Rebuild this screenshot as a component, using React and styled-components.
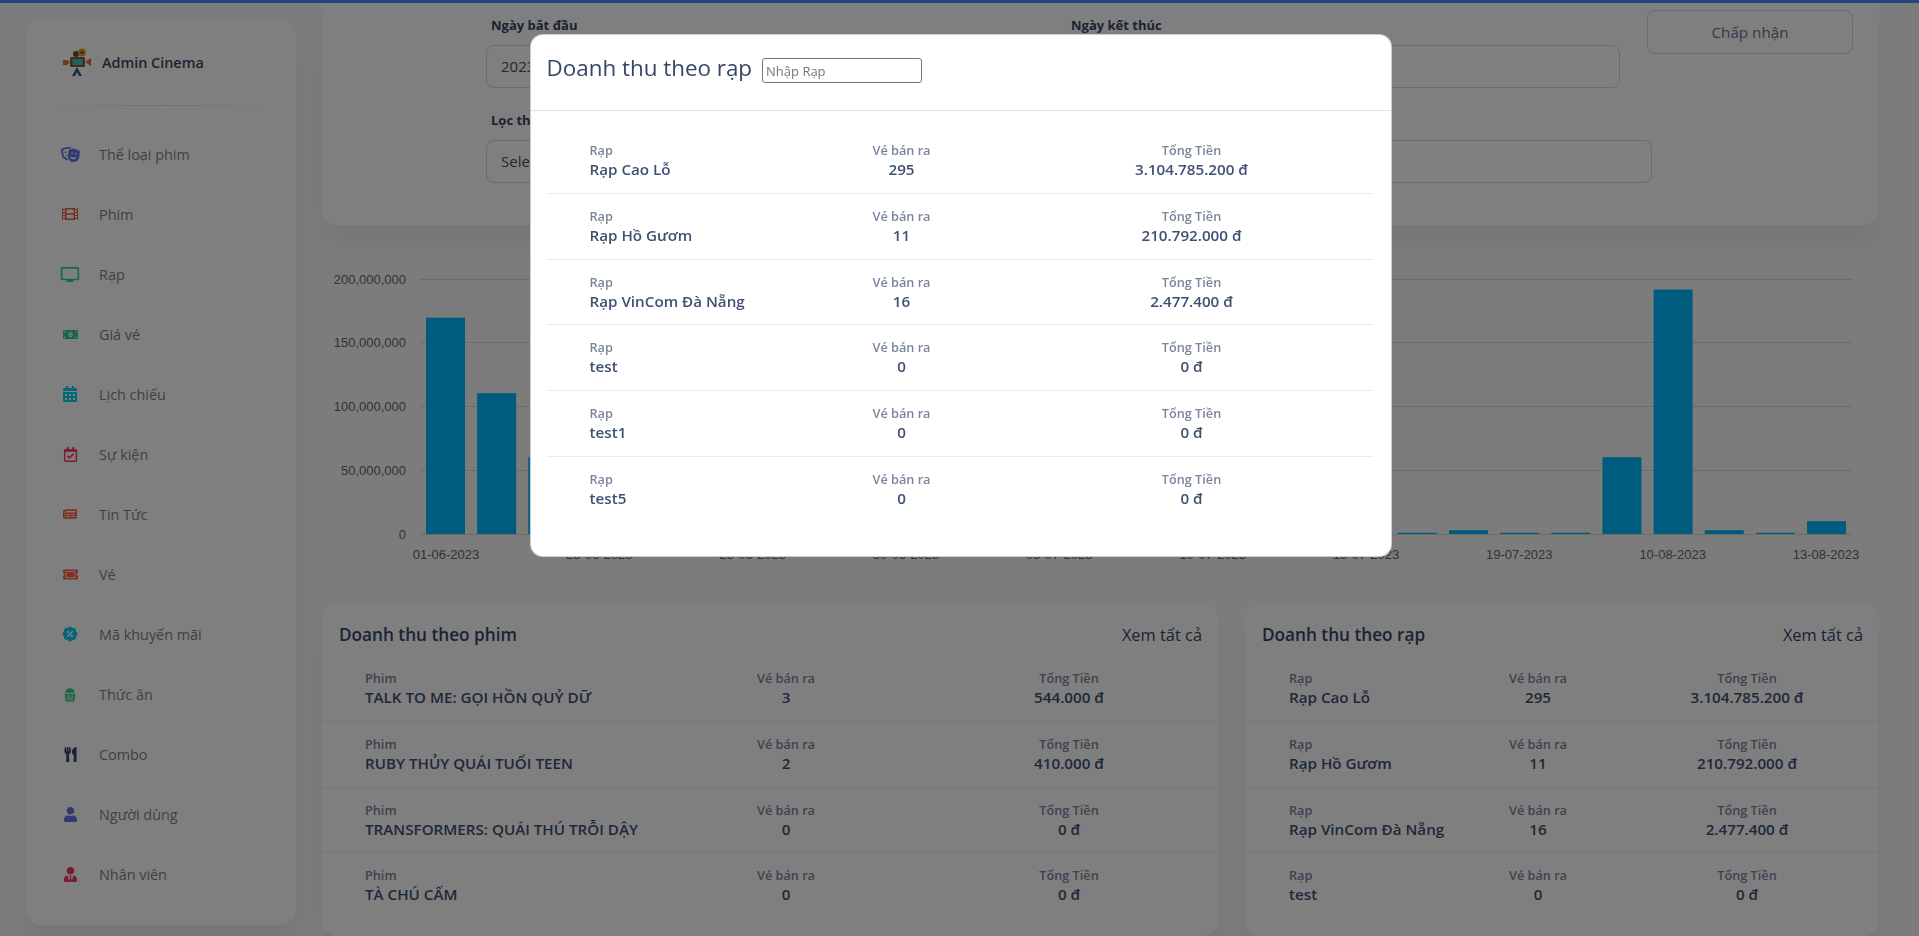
import styled, {createGlobalStyle} from "styled-components";
import {
  FaTheaterMasks, FaFilm, FaMoneyBillAlt, FaCalendarAlt, FaRegCalendarCheck, FaNewspaper,
  FaTicketAlt, FaUtensils, FaUser, FaUserTie
} from "react-icons/fa";
import {MdOutlineTv} from "react-icons/md";
import {TbRosetteDiscountFilled} from "react-icons/tb";

const GlobalStyle = createGlobalStyle`
  html, body {
    margin: 0;
    height: 936px;
    overflow: hidden;
    background: #f8f9fa;
    font-family: "Open Sans", "Noto Sans", sans-serif;
  }
  * { box-sizing: border-box; }
`;

const TopBar = styled.div`
  height: 3px;
  background: #3a8ffe;
`;

const Page = styled.div`
  display: flex;
  height: 933px;
`;

const Sidebar = styled.aside`
  width: 270px;
  height: 905px;
  margin: 17px 0 0 26px;
  padding-top: 28px;
  background: #fff;
  border-radius: 16px;
  box-shadow: 0 20px 27px rgba(0, 0, 0, .05);
  flex-shrink: 0;
`;

const Brand = styled.div`
  display: flex;
  align-items: center;
  gap: 10px;
  height: 28px;
  padding-left: 36px;
  font-size: 14.4px;
  font-weight: 600;
  color: #344767;
`;

const SideDivider = styled.div`
  height: 1px;
  margin: 29px 20px 18px;
  background: linear-gradient(90deg, transparent, rgba(0, 0, 0, .12), transparent);
`;

const Nav = styled.nav`
  display: flex;
  flex-direction: column;
`;

const NavItem = styled.a`
  display: flex;
  align-items: center;
  height: 60px;
  padding-left: 34px;
  font-size: 14.4px;
  color: #7f8188;
`;

const NavIcon = styled.span`
  display: flex;
  justify-content: center;
  width: 20px;
  margin-right: 19px;
  font-size: ${p => p.$size}px;
  color: ${p => p.$color};
`;

const Main = styled.main`
  flex: 1;
  min-width: 0;
  margin: 0 40px 0 26px;
  display: flex;
  flex-direction: column;
`;

const FilterCard = styled.section`
  height: 222px;
  padding: 7px 26px 0 164px;
  background: #fff;
  border-radius: 0 0 16px 16px;
  box-shadow: 0 20px 27px rgba(0, 0, 0, .05);
`;

const FilterRow = styled.div`
  display: flex;
  margin-bottom: 23px;
`;

const Field = styled.div`
  width: ${p => p.$width}px;
  margin-right: ${p => p.$gap || 0}px;
  padding-top: ${p => p.$top || 0}px;
`;

const FieldLabel = styled.label`
  display: block;
  height: 19px;
  margin: 0 0 10px 5px;
  font-size: 13px;
  line-height: 19px;
  font-weight: 700;
  color: #344767;
`;

const FieldBox = styled.div`
  height: 43px;
  padding: 0 14px;
  border: 1px solid #d2d6da;
  border-radius: 8px;
  background: #fff;
  font-size: 15px;
  line-height: 41px;
  color: #495057;
`;

const AcceptButton = styled.button`
  width: 206px;
  height: 44px;
  border: 1px solid #d2d6da;
  border-radius: 8px;
  background: #fff;
  font-family: inherit;
  font-size: 15.2px;
  color: #67748e;
`;

const ChartArea = styled.div`
  height: 378px;
`;

const ChartSvg = styled.svg`
  display: block;
  font-family: "Liberation Sans", Arial, sans-serif;
  font-size: 13px;
  fill: #666;
`;

const Cards = styled.div`
  display: flex;
  gap: 27px;
`;

const Card = styled.section`
  width: ${p => p.$width}px;
  height: 333px;
  background: #fff;
  border-radius: 16px;
  box-shadow: 0 20px 27px rgba(0, 0, 0, .05);
`;

const CardHead = styled.div`
  display: flex;
  justify-content: space-between;
  align-items: center;
  height: 53px;
  padding: 9px 16px 0 17px;
`;

const CardTitle = styled.h6`
  margin: 0;
  font-size: 17.2px;
  font-weight: 600;
  color: #344767;
`;

const SeeAll = styled.a`
  font-size: 16.4px;
  color: #344767;
`;

const Row = styled.div`
  display: grid;
  grid-template-columns: ${p => p.$columns};
  height: 65.8px;
  padding-top: 13px;
  border-bottom: 1px solid ${p => (p.$last ? "transparent" : "#e9ecef")};
`;

const Cell = styled.div`
  text-align: ${p => (p.$center ? "center" : "left")};
  padding-left: ${p => p.$pad || 0}px;
  white-space: nowrap;
`;

const CellLabel = styled.div`
  font-size: 12.7px;
  line-height: 18px;
  font-weight: 600;
  color: #7a859c;
`;

const CellValue = styled.div`
  font-size: 15.2px;
  line-height: 20px;
  font-weight: 600;
  color: #3f5173;
`;

const Overlay = styled.div`
  position: fixed;
  inset: 0;
  display: flex;
  justify-content: center;
  align-items: flex-start;
  padding: 34px 0 0 2px;
  background: rgba(0, 0, 0, .5);
`;

const Modal = styled.div`
  width: 862px;
  height: 523px;
  background: #fff;
  border: 1px solid rgba(0, 0, 0, .2);
  border-radius: 13px;
`;

const ModalHead = styled.div`
  display: flex;
  align-items: flex-start;
  gap: 10px;
  height: 76px;
  padding: 18px 16px 0;
  border-bottom: 1px solid #dee2e6;
`;

const ModalTitle = styled.h5`
  margin: 0;
  font-size: 22.4px;
  line-height: 30px;
  font-weight: 500;
  color: #344767;
`;

const SearchInput = styled.input`
  width: 160px;
  height: 25px;
  margin-top: 5px;
  padding: 1px 3px;
  border: 1px solid #767676;
  border-radius: 3px;
  font-family: inherit;
  font-size: 13px;
  &::placeholder { color: #757575; }
`;

const ModalBody = styled.div`
  padding: 17px 18px 0 16px;
`;

const menu = [
  ["Thể loại phim", <FaTheaterMasks/>, "#5e72e4", 19],
  ["Phim", <FaFilm/>, "#ea5b3e", 16],
  ["Rạp", <MdOutlineTv/>, "#2dce89", 23],
  ["Giá vé", <FaMoneyBillAlt/>, "#2dce89", 15],
  ["Lịch chiếu", <FaCalendarAlt/>, "#11cdef", 16],
  ["Sự kiện", <FaRegCalendarCheck/>, "#f5365c", 15],
  ["Tin Tức", <FaNewspaper/>, "#fb6340", 14],
  ["Vé", <FaTicketAlt/>, "#fb6340", 15],
  ["Mã khuyến mãi", <TbRosetteDiscountFilled/>, "#11cdef", 18],
  ["Thức ăn", <PopcornIcon/>, "#2dce89", 15],
  ["Combo", <FaUtensils/>, "#344767", 15],
  ["Người dùng", <FaUser/>, "#5e72e4", 15],
  ["Nhân viên", <FaUserTie/>, "#f5365c", 15],
];

const films = [
  ["TALK TO ME: GỌI HỒN QUỶ DỮ", "3", "544.000 đ"],
  ["RUBY THỦY QUÁI TUỔI TEEN", "2", "410.000 đ"],
  ["TRANSFORMERS: QUÁI THÚ TRỖI DẬY", "0", "0 đ"],
  ["TÀ CHÚ CẤM", "0", "0 đ"],
];

const cinemas = [
  ["Rạp Cao Lỗ", "295", "3.104.785.200 đ"],
  ["Rạp Hồ Gươm", "11", "210.792.000 đ"],
  ["Rạp VinCom Đà Nẵng", "16", "2.477.400 đ"],
  ["test", "0", "0 đ"],
  ["test1", "0", "0 đ"],
  ["test5", "0", "0 đ"],
];

const bars = [169, 110, 60, 4, 2, 1, 3, 2, 1, 4, 2, 1, 1, 2, 3, 1, 2, 1, 1, 1, 3, 1, 1, 60, 191, 3, 1, 10];
const dateLabels = [
  "01-06-2023", "23-06-2023", "28-06-2023", "30-06-2023", "05-07-2023",
  "10-07-2023", "15-07-2023", "19-07-2023", "10-08-2023", "13-08-2023"
];

function PopcornIcon() {
  return (
    <svg width="14" height="15" viewBox="0 0 18 18" fill="currentColor" preserveAspectRatio="none">
      <path d="M3 7a6 5.500 0 0 1 12 0z"/>
      <path d="M2 8h14l-1.600 9.500H3.600zM5.500 10l.6 6h1.200l-.5-6zM8.400 10v6h1.200v-6zM11.300 10l-.5 6h1.200l.6-6z" fillRule="evenodd"/>
    </svg>
  );
}

function CinemaLogo() {
  return (
    <svg width="30" height="30" viewBox="0 0 30 30">
      <circle cx="14" cy="7" r="3" fill="#6b4a1f"/>
      <circle cx="20" cy="5.500" r="4" fill="#d8a21f"/>
      <circle cx="20" cy="5.500" r="1.600" fill="#6b4a1f"/>
      <rect x="8" y="10" width="15" height="10" rx="1.500" fill="#8a5a2b"/>
      <rect x="10.500" y="12" width="10" height="6" fill="#3fc4c4"/>
      <path d="M23 15l6-4v8zM8 15l-3-2H1v5h4z" fill="#d07a3a"/>
      <path d="M15 20l-5 9h3l2-4 2 4h3z" fill="#2d5a88"/>
    </svg>
  );
}

function RevenueChart() {
  const yTicks = [[279, "200,000,000"], [342, "150,000,000"], [406, "100,000,000"], [470, "50,000,000"], [534, "0"]];
  return (
    <ChartSvg width="1557" height="378" viewBox="322 225 1557 378">
      {yTicks.map(([y, label]) => (
        <g key={label}>
          <line x1="420" x2="1852" y1={y + .5} y2={y + .5} stroke="#d9d9d9"/>
          <text x="406" y={y + 5} textAnchor="end">{label}</text>
        </g>
      ))}
      {bars.map((value, i) => (
        <rect key={i} x={426 + i * 51.15} y={534 - value * 1.28} width="39" height={value * 1.28} fill="#00b8ff"/>
      ))}
      {dateLabels.map((label, i) => (
        <text key={label} x={446 + i * 153.33} y="559" textAnchor="middle">{label}</text>
      ))}
    </ChartSvg>
  );
}

function RevenueRow({name, label, sold, total, columns, pad, last}) {
  return (
    <Row $columns={columns} $last={last}>
      <Cell $pad={pad}>
        <CellLabel>{label}</CellLabel>
        <CellValue>{name}</CellValue>
      </Cell>
      <Cell $center>
        <CellLabel>Vé bán ra</CellLabel>
        <CellValue>{sold}</CellValue>
      </Cell>
      <Cell $center>
        <CellLabel>Tổng Tiền</CellLabel>
        <CellValue>{total}</CellValue>
      </Cell>
    </Row>
  );
}

function RevenueCard({title, label, rows, width, columns, pad}) {
  return (
    <Card $width={width}>
      <CardHead>
        <CardTitle>{title}</CardTitle>
        <SeeAll>Xem tất cả</SeeAll>
      </CardHead>
      {rows.map(([name, sold, total], i) => (
        <RevenueRow key={name} name={name} label={label} sold={sold} total={total}
                    columns={columns} pad={pad} last={i === rows.length - 1}/>
      ))}
    </Card>
  );
}

export default function App() {
  return (
    <>
      <GlobalStyle/>
      <TopBar/>
      <Page>
        <Sidebar>
          <Brand><CinemaLogo/>Admin Cinema</Brand>
          <SideDivider/>
          <Nav>
            {menu.map(([label, icon, color, size]) => (
              <NavItem key={label}>
                <NavIcon $color={color} $size={size}>{icon}</NavIcon>
                {label}
              </NavItem>
            ))}
          </Nav>
        </Sidebar>
        <Main>
          <FilterCard>
            <FilterRow>
              <Field $width={564} $gap={16} $top={6}>
                <FieldLabel>Ngày bắt đầu</FieldLabel>
                <FieldBox>2023-06-01</FieldBox>
              </Field>
              <Field $width={554} $gap={27} $top={6}>
                <FieldLabel>Ngày kết thúc</FieldLabel>
                <FieldBox>2023-08-13</FieldBox>
              </Field>
              <AcceptButton>Chấp nhận</AcceptButton>
            </FilterRow>
            <Field $width={1166}>
              <FieldLabel>Lọc theo rạp</FieldLabel>
              <FieldBox>Select...</FieldBox>
            </Field>
          </FilterCard>
          <ChartArea>
            <RevenueChart/>
          </ChartArea>
          <Cards>
            <RevenueCard title="Doanh thu theo phim" label="Phim" rows={films} width={896}
                         columns="330px 268px 298px" pad={43}/>
            <RevenueCard title="Doanh thu theo rạp" label="Rạp" rows={cinemas.slice(0, 4)} width={634}
                         columns="216px 154px 264px" pad={44}/>
          </Cards>
        </Main>
      </Page>
      <Overlay>
        <Modal>
          <ModalHead>
            <ModalTitle>Doanh thu theo rạp</ModalTitle>
            <SearchInput placeholder="Nhập Rạp"/>
          </ModalHead>
          <ModalBody>
            {cinemas.map(([name, sold, total], i) => (
              <RevenueRow key={name} name={name} label="Rạp" sold={sold} total={total}
                          columns="245px 220px 360px" pad={43} last={i === cinemas.length - 1}/>
            ))}
          </ModalBody>
        </Modal>
      </Overlay>
    </>
  );
}
